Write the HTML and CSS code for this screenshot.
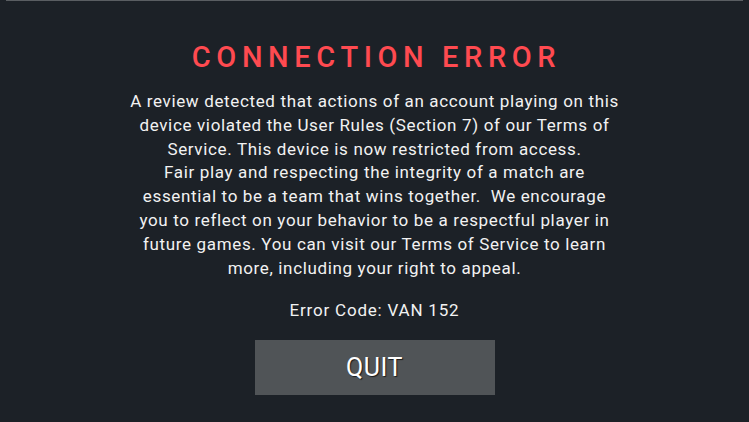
FILE: index.html
```html
<!DOCTYPE html>
<html>
<head>
<meta charset="utf-8">
<link rel="stylesheet" href="styles.css">
</head>
<body>
<div class="topline"></div>
<main class="dialog">
  <h1 class="title">CONNECTION ERROR</h1>
  <p class="message">A review detected that actions of an account playing on this<br>device violated the User Rules (Section 7) of our Terms of<br>Service. This device is now restricted from access.<br>Fair play and respecting the integrity of a match are<br>essential to be a team that wins together.&nbsp; We encourage<br>you to reflect on your behavior to be a respectful player in<br>future games. You can visit our Terms of Service to learn<br>more, including your right to appeal.</p>
  <p class="code">Error Code: VAN 152</p>
  <button class="quit">QUIT</button>
</main>
</body>
</html>
```
FILE: styles.css
```css
html, body {
  margin: 0;
  padding: 0;
  background: #1c2127;
  width: 749px;
  height: 422px;
  overflow: hidden;
}
body {
  font-family: Roboto, "Liberation Sans", sans-serif;
  color: #f2f2f2;
}
.topline {
  height: 1px;
  margin: 0 6px;
  background: #5a5e62;
}
.dialog {
  display: flex;
  flex-direction: column;
  align-items: center;
  padding-top: 39px;
}
.title {
  margin: 0;
  font-size: 29px;
  font-weight: 500;
  letter-spacing: 5.6px;
  color: #ff4a50;
  line-height: 34px;
  padding-left: 4px;
}
.message {
  margin: 16px 0 0;
  font-size: 17px;
  letter-spacing: 0.65px;
  line-height: 23.8px;
  text-align: center;
}
.code {
  margin: 18px 0 0;
  font-size: 17px;
  letter-spacing: 0.8px;
  line-height: 24px;
}
.quit {
  margin-top: 18px;
  width: 240px;
  height: 55px;
  border: none;
  background: #505457;
  color: #ffffff;
  font-family: Roboto, "Liberation Sans", sans-serif;
  font-size: 25px;
  letter-spacing: 0.5px;
  text-shadow: 1px 1px 1px #1a1a1a;
  padding: 0;
}
```
